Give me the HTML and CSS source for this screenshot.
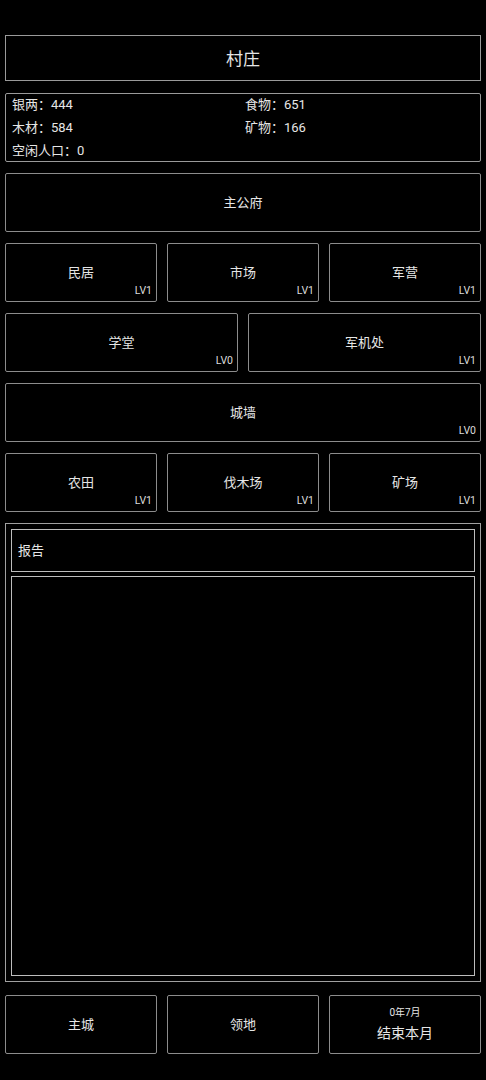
FILE: index.html
```html
<!DOCTYPE html>
<html lang="zh-CN">
<head>
<meta charset="utf-8">
<title>村庄</title>
<link rel="stylesheet" href="styles.css">
</head>
<body>
<div class="page">
  <div class="title">村庄</div>
  <div class="stats">
    <div>银两：444</div><div>食物：651</div>
    <div>木材：584</div><div>矿物：166</div>
    <div>空闲人口：0</div>
  </div>
  <div class="row"><div class="btn">主公府</div></div>
  <div class="row">
    <div class="btn">民居<span class="lv">LV1</span></div>
    <div class="btn">市场<span class="lv">LV1</span></div>
    <div class="btn">军营<span class="lv">LV1</span></div>
  </div>
  <div class="row">
    <div class="btn">学堂<span class="lv">LV0</span></div>
    <div class="btn">军机处<span class="lv">LV1</span></div>
  </div>
  <div class="row"><div class="btn">城墙<span class="lv">LV0</span></div></div>
  <div class="row">
    <div class="btn">农田<span class="lv">LV1</span></div>
    <div class="btn">伐木场<span class="lv">LV1</span></div>
    <div class="btn">矿场<span class="lv">LV1</span></div>
  </div>
  <div class="report">
    <div class="report-head">报告</div>
    <div class="report-body"></div>
  </div>
  <div class="row bottom">
    <div class="btn">主城</div>
    <div class="btn">领地</div>
    <div class="btn stack"><span class="date">0年7月</span><span class="end">结束本月</span></div>
  </div>
</div>
</body>
</html>
```
FILE: styles.css
```css
html, body {
  margin: 0;
  padding: 0;
  background: #000;
}
body {
  color: #e6e6e6;
  font-family: Roboto, "Noto Sans CJK SC", sans-serif;
  font-size: 13px;
}
.page {
  padding: 35px 5px 0 5px;
  display: flex;
  flex-direction: column;
}
.title {
  height: 46px;
  box-sizing: border-box;
  border: 1px solid #9a9a9a;
  display: flex;
  align-items: center;
  justify-content: center;
  font-size: 17px;
  padding-bottom: 1px;
}
.stats {
  margin-top: 12px;
  height: 69px;
  box-sizing: border-box;
  border: 1px solid #9a9a9a;
  border-radius: 2px;
  padding: 0 6px;
  display: grid;
  grid-template-columns: 233px 1fr;
  grid-auto-rows: 23px;
  align-content: start;
  line-height: 21px;
}
.row {
  margin-top: 11px;
  display: flex;
  gap: 10px;
}
.btn {
  position: relative;
  flex: 1 1 0;
  height: 59px;
  box-sizing: border-box;
  border: 1px solid #8c8c8c;
  border-radius: 2px;
  display: flex;
  align-items: center;
  justify-content: center;
  padding-bottom: 2px;
}
.lv {
  position: absolute;
  right: 4px;
  bottom: 4px;
  font-size: 10.5px;
  line-height: 12px;
  color: #dcdcdc;
}
.report {
  margin-top: 11px;
  height: 459px;
  box-sizing: border-box;
  border: 1px solid #a0a0a0;
  padding: 5px;
  display: flex;
  flex-direction: column;
  gap: 4px;
}
.report-head {
  height: 43px;
  box-sizing: border-box;
  border: 1px solid #bdbdbd;
  padding: 0 0 2px 6px;
  display: flex;
  align-items: center;
}
.report-body {
  flex: 1;
  box-sizing: border-box;
  border: 1px solid #bdbdbd;
}
.row.bottom {
  margin-top: 13px;
}
.stack {
  flex-direction: column;
  gap: 4px;
  padding-bottom: 0;
}
.date {
  font-size: 10px;
  line-height: 13px;
}
.end {
  font-size: 14px;
  line-height: 20px;
}
```
